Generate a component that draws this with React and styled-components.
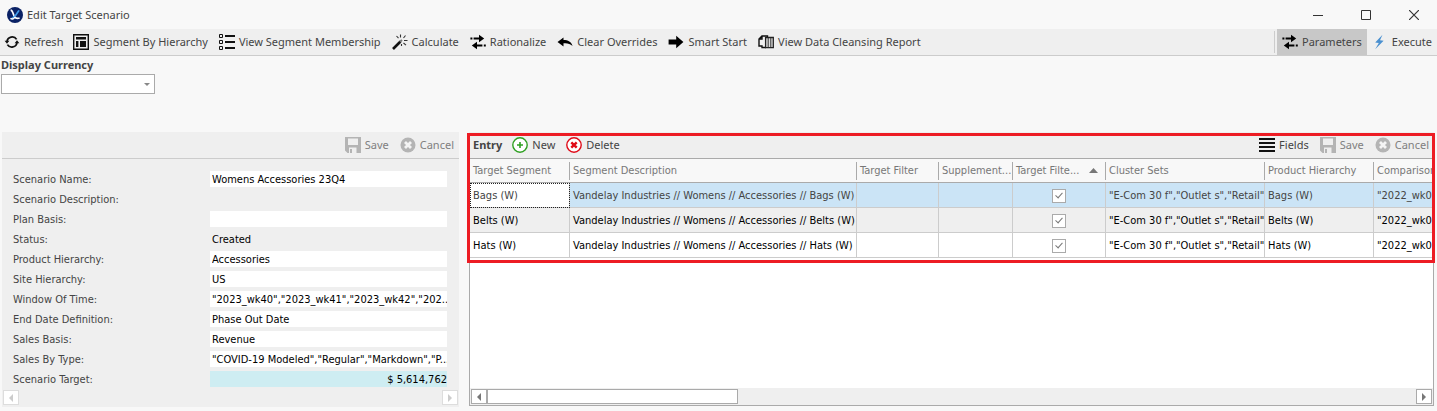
import React from "react";
import styled, { createGlobalStyle, css } from "styled-components";

const uiFont = '"Noto Sans", "Open Sans", sans-serif';
const dataFont = '"DejaVu Sans Condensed", "DejaVu Sans", sans-serif';

const GlobalStyle = createGlobalStyle`
  *, *::before, *::after { box-sizing: border-box; }
  body {
    margin: 0;
    background: #f8f8f8;
    color: #444;
    font: 11px/16px ${uiFont};
  }
  button, input, select { font: inherit; color: inherit; margin: 0; }
`;

const Window = styled.div`
  display: flex;
  flex-direction: column;
  min-height: 100vh;
`;

const TitleBar = styled.header`
  display: flex;
  align-items: center;
  justify-content: space-between;
  height: 29px;
  padding-left: 7px;
`;

const Title = styled.h1`
  display: flex;
  align-items: center;
  gap: 4px;
  margin: 0;
  font-size: 11px;
  font-weight: 400;
`;

const WindowControls = styled.div`
  display: flex;
`;

const WindowButton = styled.button`
  display: flex;
  align-items: center;
  justify-content: center;
  width: 48px;
  height: 28px;
  padding: 0 0 0 2px;
  border: 0;
  background: none;
  color: #333;
`;

const Toolbar = styled.nav`
  display: flex;
  justify-content: space-between;
  height: 27px;
  border-bottom: 1px solid #ccc;
  background: #efefef;
`;

const ButtonGroup = styled.div`
  display: flex;
  align-items: stretch;
  gap: ${(p) => (p.$tight ? 0 : 1)}px;
`;

const Divider = styled.span`
  width: 1px;
  margin: 2px 2px;
  background: #ccc;
`;

const ToolButton = styled.button`
  display: flex;
  align-items: center;
  gap: 4px;
  padding: 0 5px;
  border: 0;
  white-space: nowrap;
  background: ${(p) => (p.$active ? "#c8c8c8" : "transparent")};
  ${(p) => p.$compact && css`padding: 0 4px;`}
  &:disabled { color: #808080; }
  svg { flex: none; }
`;

const CurrencyField = styled.div`
  display: flex;
  flex-direction: column;
  align-items: flex-start;
  gap: 1px;
  padding: 1px 1px 0;
`;

const CurrencyLabel = styled.label`
  font-weight: 700;
`;

const SelectFrame = styled.span`
  display: flex;
  align-items: center;
  width: 154px;
  height: 20px;
  padding-right: 4px;
  border: 1px solid #aaa;
  background: #fff;
  color: #888;
`;

const Select = styled.select`
  flex: 1;
  height: 18px;
  border: 0;
  appearance: none;
  background: transparent;
`;

const Workspace = styled.main`
  flex: 1;
  display: grid;
  grid-template-columns: minmax(0, 457fr) minmax(0, 967fr);
  gap: 8px;
  padding: 38px 3px 5px 2px;
`;

const ScenarioPanel = styled.section`
  display: flex;
  flex-direction: column;
  background: #efefef;
`;

const PanelBar = styled.div`
  display: flex;
  align-items: stretch;
  justify-content: ${(p) => (p.$end ? "flex-end" : "space-between")};
  gap: 1px;
  height: 27px;
  border-bottom: 1px solid ${(p) => (p.$strong ? "#aaa" : "#ccc")};
  background: #efefef;
`;

const PanelTitle = styled.h2`
  align-self: center;
  margin: 0;
  padding: 0 4px;
  font-size: 11px;
`;

const Form = styled.form`
  flex: 1;
  display: flex;
  flex-direction: column;
  gap: 4px;
  padding: 12px 12px 3px 11px;
  font-family: ${dataFont};
`;

const FormRow = styled.div`
  display: grid;
  grid-template-columns: 197fr 237fr;
  height: 16px;
`;

const FieldLabel = styled.label`
  padding-top: 1px;
`;

const Field = styled.input`
  min-width: 0;
  height: 16px;
  padding: 1px 0 0 2px;
  border: 0;
  color: #000;
  text-align: ${(p) => (p.$amount ? "right" : "left")};
  background: ${(p) => (p.$amount ? "#ceedf2" : p.readOnly ? "transparent" : "#fff")};
`;

const Scroller = styled.div`
  display: flex;
  align-items: ${(p) => (p.$framed ? "center" : "flex-start")};
  height: 17px;
  padding: 0 1px;
  background: #efefef;
`;

const ScrollButton = styled.button`
  display: flex;
  align-items: center;
  justify-content: center;
  width: 16px;
  height: 15px;
  padding: 0;
  border: 1px solid ${(p) => (p.$muted ? "#ddd" : "#aaa")};
  background: #fff;
  color: ${(p) => (p.$muted ? "#ccc" : "#777")};
`;

const ScrollTrack = styled.div`
  flex: 1;
  display: flex;
`;

const ScrollThumb = styled.div`
  width: 27%;
  height: 15px;
  border: 1px solid #aaa;
  background: #fff;
`;

const EntryPanel = styled.section`
  position: relative;
  display: flex;
  flex-direction: column;
  padding: 0 0 1px 2px;
`;

const EntryGrid = styled.div`
  flex: 1;
  display: flex;
  flex-direction: column;
  border: 1px solid #aaa;
  border-top: 0;
  background: #fff;
`;

const TableViewport = styled.div`
  flex: 1;
  overflow: hidden;
`;

const Table = styled.table`
  width: 1000px;
  table-layout: fixed;
  border-collapse: separate;
  border-spacing: 0;
  font-family: ${dataFont};
`;

const Col = styled.col`
  width: ${(p) => p.$width}px;
`;

const HeadCell = styled.th`
  height: 24px;
  padding: 0;
  border-bottom: 1px solid #aaa;
  background: #f8f8f8;
  color: #777;
  font-weight: 400;
  text-align: left;
`;

const HeadLabel = styled.span`
  display: flex;
  align-items: center;
  justify-content: space-between;
  height: 18px;
  padding: 0 7px 0 3px;
  border-right: 1px solid #aaa;
  white-space: nowrap;
`;

const BodyRow = styled.tr`
  color: ${(p) => (p.$selected ? "#444" : "#000")};
  background: ${(p) => (p.$selected ? "#cbe4f6" : "#fff")};
  &:nth-child(2) { background: #efefef; }
`;

const Cell = styled.td`
  height: 25px;
  padding: ${(p) => (p.$center ? "1px 0 0" : "1px 0 0 3px")};
  border-right: 1px solid #ccc;
  border-bottom: 1px solid #ccc;
  white-space: nowrap;
  overflow: hidden;
  text-align: ${(p) => (p.$center ? "center" : "left")};
  ${(p) => p.$focused && css`
    background: #fff;
    outline: 1px dotted #222;
    outline-offset: -1px;
  `}
`;

const CheckBox = styled.input`
  appearance: none;
  display: inline-grid;
  place-items: center;
  width: 14px;
  height: 14px;
  border: 1px solid #aaa;
  background: #fff;
  vertical-align: middle;
  &:checked::after {
    content: "";
    width: 4px;
    height: 7px;
    margin-bottom: 2px;
    border: solid #777;
    border-width: 0 1px 1px 0;
    transform: rotate(42deg);
  }
`;

const Highlight = styled.div`
  position: absolute;
  top: 1px;
  right: -1px;
  left: 0;
  height: 130px;
  border: 3px solid #ed1c24;
  pointer-events: none;
`;

const Svg = ({ size = 16, children, ...rest }) => (
  <svg width={size} height={size} viewBox="0 0 16 16" fill="none" aria-hidden="true" {...rest}>
    {children}
  </svg>
);

const LogoIcon = () => (
  <Svg>
    <circle cx="8" cy="8" r="8" fill="#0b2265" />
    <path d="M3.600 3.200C6 3.400 6 7.600 7.600 9.800c1 1.600 2.800 2 5 1.200" stroke="#fff" strokeWidth="1.700" />
    <path d="M12 3.400C10.600 6 8.200 9.400 4.600 12" stroke="#3f9be8" strokeWidth="1.800" />
    <path d="M3.400 11.400c1.800 1.200 3.600.2 4.800-1.600" stroke="#fff" strokeWidth="1.300" />
  </Svg>
);

const RefreshIcon = () => (
  <Svg>
    <path d="M3 7.500A5.200 5.200 0 0 1 12.600 5.400M13 8.500A5.200 5.200 0 0 1 3.400 10.600" stroke="#111" strokeWidth="1.800" />
    <path d="M.6 6.800h4.800L3 9.800zM10.600 9.200h4.800L13 6.200z" fill="#111" />
  </Svg>
);

const HierarchyIcon = () => (
  <Svg>
    <path d="M.7.700h14.600v14.600H.7z" stroke="#111" strokeWidth="1.400" />
    <path d="M3 3h10v2.600H3zM3 7h2.400v6H3zM7 7h6v6H7z" fill="#111" />
  </Svg>
);

const ListIcon = () => (
  <Svg>
    <path d="M.5.500h3v3h-3zM.5 6.500h3v3h-3zM.5 12.500h3v3h-3z" stroke="#111" />
    <path d="M6 2h10M6 8h10M6 14h10" stroke="#111" strokeWidth="2" />
  </Svg>
);

const WandIcon = () => (
  <Svg>
    <path d="M1 15 8.500 7.500" stroke="#111" strokeWidth="2.600" />
    <path d="M8 7.800 10 6" stroke="#777" strokeWidth="2" />
    <path d="M8.500.5v3M4.500 2l2 2.200M13.500 1.500 11.500 4M12 6.500h3.500M11.500 9l2.500 2.200M9.500 10v2" stroke="#333" strokeWidth="1.100" />
  </Svg>
);

const SwapIcon = () => (
  <Svg>
    <path d="M3.600 4.500H10M6 11.500h6.400" stroke="#000" strokeWidth="2.200" />
    <path d="M9 .8v7.400l5.200-3.700zM7 7.800v7.400L1.800 11.500z" fill="#000" />
    <path d="M.4 3.400h2v2h-2zM13.800 10.600h2v2h-2z" fill="#000" />
  </Svg>
);

const BackIcon = () => (
  <Svg>
    <path d="M.5 8 6.500 3.400V6c4.500 0 8 1.800 9 6-2.500-2.400-5-3-9-2.700v3.300z" fill="#000" />
  </Svg>
);

const ForwardIcon = () => (
  <Svg>
    <path d="M.6 5.400h7.600V1.800L15.400 8l-7.200 6.200v-3.600H.6z" fill="#000" />
  </Svg>
);

const ReportIcon = () => (
  <Svg>
    <path d="M8 13.500H4V12H1V5l3-3h5.500v2M4 2.500V5H1" stroke="#111" strokeWidth="1.400" />
    <path d="M7.600 3.500h7.700v10.200H7.600z" fill="#ddd" stroke="#222" strokeWidth="1.300" />
    <path d="M10.200 4v9.500M12.800 4v9.500" stroke="#333" strokeWidth="1" />
  </Svg>
);

const BoltIcon = () => (
  <Svg>
    <path d="M10.500.8 3.200 8.400l3.600.6L3.200 15.200l8.400-8.400-3.600-.5z" fill="#4a90d0" />
  </Svg>
);

const SaveIcon = () => (
  <Svg>
    <path d="M0 0h16v16H2.500L0 13.500zM3 1.500V8h10V1.500zM4 10.500V16h7.500v-5.500z" fill="#b4b4b4" fillRule="evenodd" />
    <path d="M5 12h2v4H5z" fill="#b4b4b4" />
  </Svg>
);

const CancelIcon = () => (
  <Svg>
    <circle cx="8" cy="8" r="7.500" fill="#b4b4b4" />
    <path d="m5 5 6 6M11 5l-6 6" stroke="#f4f4f4" strokeWidth="2.800" />
  </Svg>
);

const NewIcon = () => (
  <Svg>
    <circle cx="8" cy="8" r="7.200" fill="#fff" stroke="#2ea021" strokeWidth="1.400" />
    <path d="M8 5v6M5 8h6" stroke="#2ea021" strokeWidth="1.600" />
  </Svg>
);

const DeleteIcon = () => (
  <Svg>
    <circle cx="8" cy="8" r="7.200" fill="#fff" stroke="#e00b18" strokeWidth="1.400" />
    <path d="m5.300 5.300 5.400 5.400M10.700 5.300l-5.400 5.400" stroke="#e00b18" strokeWidth="2.400" />
  </Svg>
);

const FieldsIcon = () => (
  <Svg>
    <path d="M0 2h16M0 6h16M0 10h16M0 14h16" stroke="#111" strokeWidth="2" />
  </Svg>
);

const Triangle = ({ d, width = 8, height = 8 }) => (
  <svg width={width} height={height} viewBox={`0 0 ${width} ${height}`} aria-hidden="true">
    <path d={d} fill="currentColor" />
  </svg>
);

const LeftArrow = () => <Triangle d="M6 0v8L2 4z" />;
const RightArrow = () => <Triangle d="M2 0v8l4-4z" />;

const tools = [
  ["Refresh", RefreshIcon],
  ["Segment By Hierarchy", HierarchyIcon],
  ["View Segment Membership", ListIcon],
  ["Calculate", WandIcon],
  ["Rationalize", SwapIcon],
  ["Clear Overrides", BackIcon],
  ["Smart Start", ForwardIcon],
  ["View Data Cleansing Report", ReportIcon],
];

const fields = [
  { label: "Scenario Name:", value: "Womens Accessories 23Q4" },
  { label: "Scenario Description:", value: "", fixed: true },
  { label: "Plan Basis:", value: "" },
  { label: "Status:", value: "Created", fixed: true },
  { label: "Product Hierarchy:", value: "Accessories" },
  { label: "Site Hierarchy:", value: "US" },
  { label: "Window Of Time:", value: '"2023_wk40","2023_wk41","2023_wk42","202...' },
  { label: "End Date Definition:", value: "Phase Out Date" },
  { label: "Sales Basis:", value: "Revenue" },
  { label: "Sales By Type:", value: '"COVID-19 Modeled","Regular","Markdown","P...' },
  { label: "Scenario Target:", value: "$ 5,614,762", amount: true },
];

const columns = [
  ["Target Segment", 100],
  ["Segment Description", 287],
  ["Target Filter", 82],
  ["Supplement...", 74],
  ["Target Filte...", 93],
  ["Cluster Sets", 159],
  ["Product Hierarchy", 109],
  ["Comparison", 96],
];

const segments = ["Bags (W)", "Belts (W)", "Hats (W)"];

const Tool = ({ icon: Icon, children, ...rest }) => (
  <ToolButton type="button" {...rest}>
    <Icon />
    {children}
  </ToolButton>
);

export default function App() {
  return (
    <Window>
      <GlobalStyle />
      <TitleBar>
        <Title>
          <LogoIcon />
          Edit Target Scenario
        </Title>
        <WindowControls>
          <WindowButton type="button" aria-label="Minimize">
            <Svg size={10} viewBox="0 0 10 10"><path d="M0 5.500h10" stroke="currentColor" /></Svg>
          </WindowButton>
          <WindowButton type="button" aria-label="Maximize">
            <Svg size={10} viewBox="0 0 10 10"><path d="M.5.500h9v9h-9z" stroke="currentColor" /></Svg>
          </WindowButton>
          <WindowButton type="button" aria-label="Close">
            <Svg size={10} viewBox="0 0 10 10"><path d="m0 0 10 10M10 0 0 10" stroke="currentColor" strokeWidth="1.200" /></Svg>
          </WindowButton>
        </WindowControls>
      </TitleBar>

      <Toolbar>
        <ButtonGroup>
          {tools.map(([label, icon], i) => (
            <Tool key={label} icon={icon} $compact={i === 0}>{label}</Tool>
          ))}
        </ButtonGroup>
        <ButtonGroup $tight>
          <Divider />
          <Tool icon={SwapIcon} $active>Parameters</Tool>
          <Tool icon={BoltIcon}>Execute</Tool>
        </ButtonGroup>
      </Toolbar>

      <CurrencyField>
        <CurrencyLabel htmlFor="currency">Display Currency</CurrencyLabel>
        <SelectFrame>
          <Select id="currency" defaultValue="">
            <option value="" />
          </Select>
          <Triangle width={6} height={3} d="M0 0h6L3 3z" />
        </SelectFrame>
      </CurrencyField>

      <Workspace>
        <ScenarioPanel>
          <PanelBar $end>
            <Tool icon={SaveIcon} disabled>Save</Tool>
            <Tool icon={CancelIcon} disabled>Cancel</Tool>
          </PanelBar>
          <Form>
            {fields.map((f, i) => (
              <FormRow key={f.label}>
                <FieldLabel htmlFor={`field-${i}`}>{f.label}</FieldLabel>
                <Field id={`field-${i}`} defaultValue={f.value} readOnly={f.fixed} $amount={f.amount} />
              </FormRow>
            ))}
          </Form>
          <Scroller>
            <ScrollButton type="button" aria-label="Scroll left" $muted><LeftArrow /></ScrollButton>
            <ScrollTrack />
            <ScrollButton type="button" aria-label="Scroll right" $muted><RightArrow /></ScrollButton>
          </Scroller>
        </ScenarioPanel>

        <EntryPanel>
          <PanelBar $strong>
            <ButtonGroup>
              <PanelTitle>Entry</PanelTitle>
              <Tool icon={NewIcon}>New</Tool>
              <Tool icon={DeleteIcon}>Delete</Tool>
            </ButtonGroup>
            <ButtonGroup>
              <Tool icon={FieldsIcon}>Fields</Tool>
              <Tool icon={SaveIcon} disabled>Save</Tool>
              <Tool icon={CancelIcon} disabled>Cancel</Tool>
            </ButtonGroup>
          </PanelBar>
          <EntryGrid>
            <TableViewport>
              <Table>
                <colgroup>
                  {columns.map(([name, width]) => <Col key={name} $width={width} />)}
                </colgroup>
                <thead>
                  <tr>
                    {columns.map(([name], i) => (
                      <HeadCell key={name} scope="col">
                        <HeadLabel>
                          {name}
                          {i === 4 && <Triangle width={9} height={5} d="M0 5h9L4.500 0z" />}
                        </HeadLabel>
                      </HeadCell>
                    ))}
                  </tr>
                </thead>
                <tbody>
                  {segments.map((name, i) => (
                    <BodyRow key={name} $selected={i === 0}>
                      <Cell $focused={i === 0}>{name}</Cell>
                      <Cell>{`Vandelay Industries // Womens // Accessories // ${name}`}</Cell>
                      <Cell />
                      <Cell />
                      <Cell $center>
                        <CheckBox type="checkbox" defaultChecked aria-label={`Target filter for ${name}`} />
                      </Cell>
                      <Cell>"E-Com 30 f","Outlet s","Retail"</Cell>
                      <Cell>{name}</Cell>
                      <Cell>"2022_wk0</Cell>
                    </BodyRow>
                  ))}
                </tbody>
              </Table>
            </TableViewport>
            <Scroller $framed>
              <ScrollButton type="button" aria-label="Scroll left"><LeftArrow /></ScrollButton>
              <ScrollTrack><ScrollThumb /></ScrollTrack>
              <ScrollButton type="button" aria-label="Scroll right"><RightArrow /></ScrollButton>
            </Scroller>
          </EntryGrid>
          <Highlight />
        </EntryPanel>
      </Workspace>
    </Window>
  );
}
